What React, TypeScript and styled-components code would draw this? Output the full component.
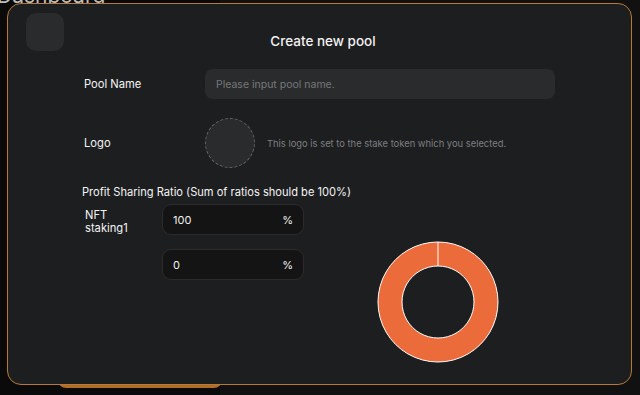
import React from "react";
import styled, { createGlobalStyle } from "styled-components";

const GlobalStyle = createGlobalStyle`
  html, body {
    margin: 0;
    padding: 0;
    background: #0b0b0b;
    font-family: Inter, "Noto Sans", "Liberation Sans", sans-serif;
    overflow: hidden;
  }
`;

const Page = styled.div`
  display: flex;
  width: 640px;
  height: 395px;
  position: relative;
`;

const Side = styled.div`
  width: 220px;
  background: #0a0a0a;
  display: flex;
  flex-direction: column;
`;

const Main = styled.div`
  flex: 1;
  background: #111111;
`;

const PageTitle = styled.h1`
  margin: -16px 0 0 -3px;
  font-size: 21px;
  font-weight: 400;
  color: #bdbdbd;
  line-height: 24px;
  white-space: nowrap;
`;

const BackButton = styled.div`
  margin: 342px 0 0 58px;
  width: 164px;
  height: 38px;
  border-radius: 8px;
  background: #b06d2a;
`;

const Overlay = styled.div`
  position: absolute;
  inset: 0;
  display: flex;
  align-items: flex-start;
  padding: 3px 8px 0 7px;
`;

const Modal = styled.div`
  width: 625px;
  height: 382px;
  box-sizing: border-box;
  background: #1d1e20;
  border: 1px solid #b77a36;
  border-radius: 14px;
  padding: 9px 18px 0 18px;
  display: flex;
  flex-direction: column;
`;

const Header = styled.div`
  display: grid;
  grid-template-columns: 38px 1fr 38px;
  height: 38px;
`;

const CloseBox = styled.div`
  width: 38px;
  height: 38px;
  border-radius: 10px;
  background: #2a2b2d;
`;

const Title = styled.h2`
  margin: 0;
  align-self: end;
  text-align: center;
  font-size: 13.5px;
  font-weight: 500;
  line-height: 18px;
  color: #f2f2f2;
  padding-bottom: 1px;
  padding-left: 7px;
`;

const Form = styled.div`
  display: flex;
  flex-direction: column;
  padding: 18px 0 0 58px;
`;

const Row = styled.div<{ $labelWidth?: number }>`
  display: grid;
  grid-template-columns: ${(p) => p.$labelWidth ?? 121}px auto;
  align-items: center;
`;

const Label = styled.div`
  font-size: 11.2px;
  color: #f4f4f4;
  line-height: 13px;
`;

const NameInput = styled.input`
  width: 350px;
  height: 30px;
  box-sizing: border-box;
  border: none;
  outline: none;
  border-radius: 8px;
  background: #2a2b2d;
  padding: 0 11px;
  font-family: inherit;
  font-size: 10.5px;
  color: #eee;
  &::placeholder {
    color: #77787a;
  }
`;

const LogoRow = styled(Row)`
  margin-top: 19px;
`;

const LogoWrap = styled.div`
  display: flex;
  align-items: center;
  gap: 12px;
`;

const LogoCircle = styled.div`
  width: 50px;
  height: 50px;
  box-sizing: border-box;
  border-radius: 50%;
  border: 1px dashed #67686a;
  background: #2a2b2d;
`;

const Hint = styled.span`
  font-size: 9.4px;
  color: #7d7e80;
`;

const SectionTitle = styled.div`
  margin: 17px 0 0 -2px;
  font-size: 11.1px;
  color: #f4f4f4;
  line-height: 14px;
`;

const RatioSection = styled.div`
  display: flex;
  margin-top: 5px;
`;

const RatioList = styled.div`
  display: flex;
  flex-direction: column;
  gap: 14px;
`;

const RatioRow = styled(Row)`
  align-items: start;
`;

const RatioLabel = styled(Label)`
  padding: 5px 0 0 1px;
`;

const RatioBox = styled.div`
  width: 142px;
  height: 31px;
  box-sizing: border-box;
  border: 1px solid #2a2b2d;
  border-radius: 9px;
  background: #141414;
  display: flex;
  align-items: center;
  justify-content: space-between;
  padding: 0 10px 0 10px;
  font-size: 11px;
  color: #f0f0f0;
`;

const ChartWrap = styled.div`
  margin: 37px 0 0 73px;
  width: 122px;
  height: 122px;
`;

const ratios = [
  { label: "NFT staking1", value: 100 },
  { label: "", value: 0 },
];

const Donut = () => {
  const cx = 61;
  const cy = 61;
  const R = 60;
  const r = 36;
  const ring = `M ${cx} ${cy - R} A ${R} ${R} 0 1 1 ${cx - 0.01} ${cy - R} Z M ${cx} ${cy - r} A ${r} ${r} 0 1 0 ${cx + 0.01} ${cy - r} Z`;
  return (
    <svg width="122" height="122" viewBox="0 0 122 122">
      <path d={ring} fill="#ec6b3b" fillRule="evenodd" stroke="#ffffff" strokeWidth="1" />
      <line x1={cx} y1={cy - R} x2={cx} y2={cy - r} stroke="#ffffff" strokeWidth="1" />
    </svg>
  );
};

const App = () => {
  return (
    <>
      <GlobalStyle />
      <Page>
        <Side>
          <PageTitle>Dashboard</PageTitle>
          <BackButton />
        </Side>
        <Main />
        <Overlay>
          <Modal>
            <Header>
              <CloseBox />
              <Title>Create new pool</Title>
            </Header>
            <Form>
              <Row>
                <Label>Pool Name</Label>
                <NameInput placeholder="Please input pool name." />
              </Row>
              <LogoRow>
                <Label>Logo</Label>
                <LogoWrap>
                  <LogoCircle />
                  <Hint>This logo is set to the stake token which you selected.</Hint>
                </LogoWrap>
              </LogoRow>
              <SectionTitle>Profit Sharing Ratio (Sum of ratios should be 100%)</SectionTitle>
              <RatioSection>
                <RatioList>
                  {ratios.map((r, i) => (
                    <RatioRow key={i} $labelWidth={78}>
                      <RatioLabel>
                        {r.label === "NFT staking1" ? (
                          <>
                            NFT
                            <br />
                            staking1
                          </>
                        ) : (
                          r.label
                        )}
                      </RatioLabel>
                      <RatioBox>
                        <span>{r.value}</span>
                        <span>%</span>
                      </RatioBox>
                    </RatioRow>
                  ))}
                </RatioList>
                <ChartWrap>
                  <Donut />
                </ChartWrap>
              </RatioSection>
            </Form>
          </Modal>
        </Overlay>
      </Page>
    </>
  );
};

export default App;
